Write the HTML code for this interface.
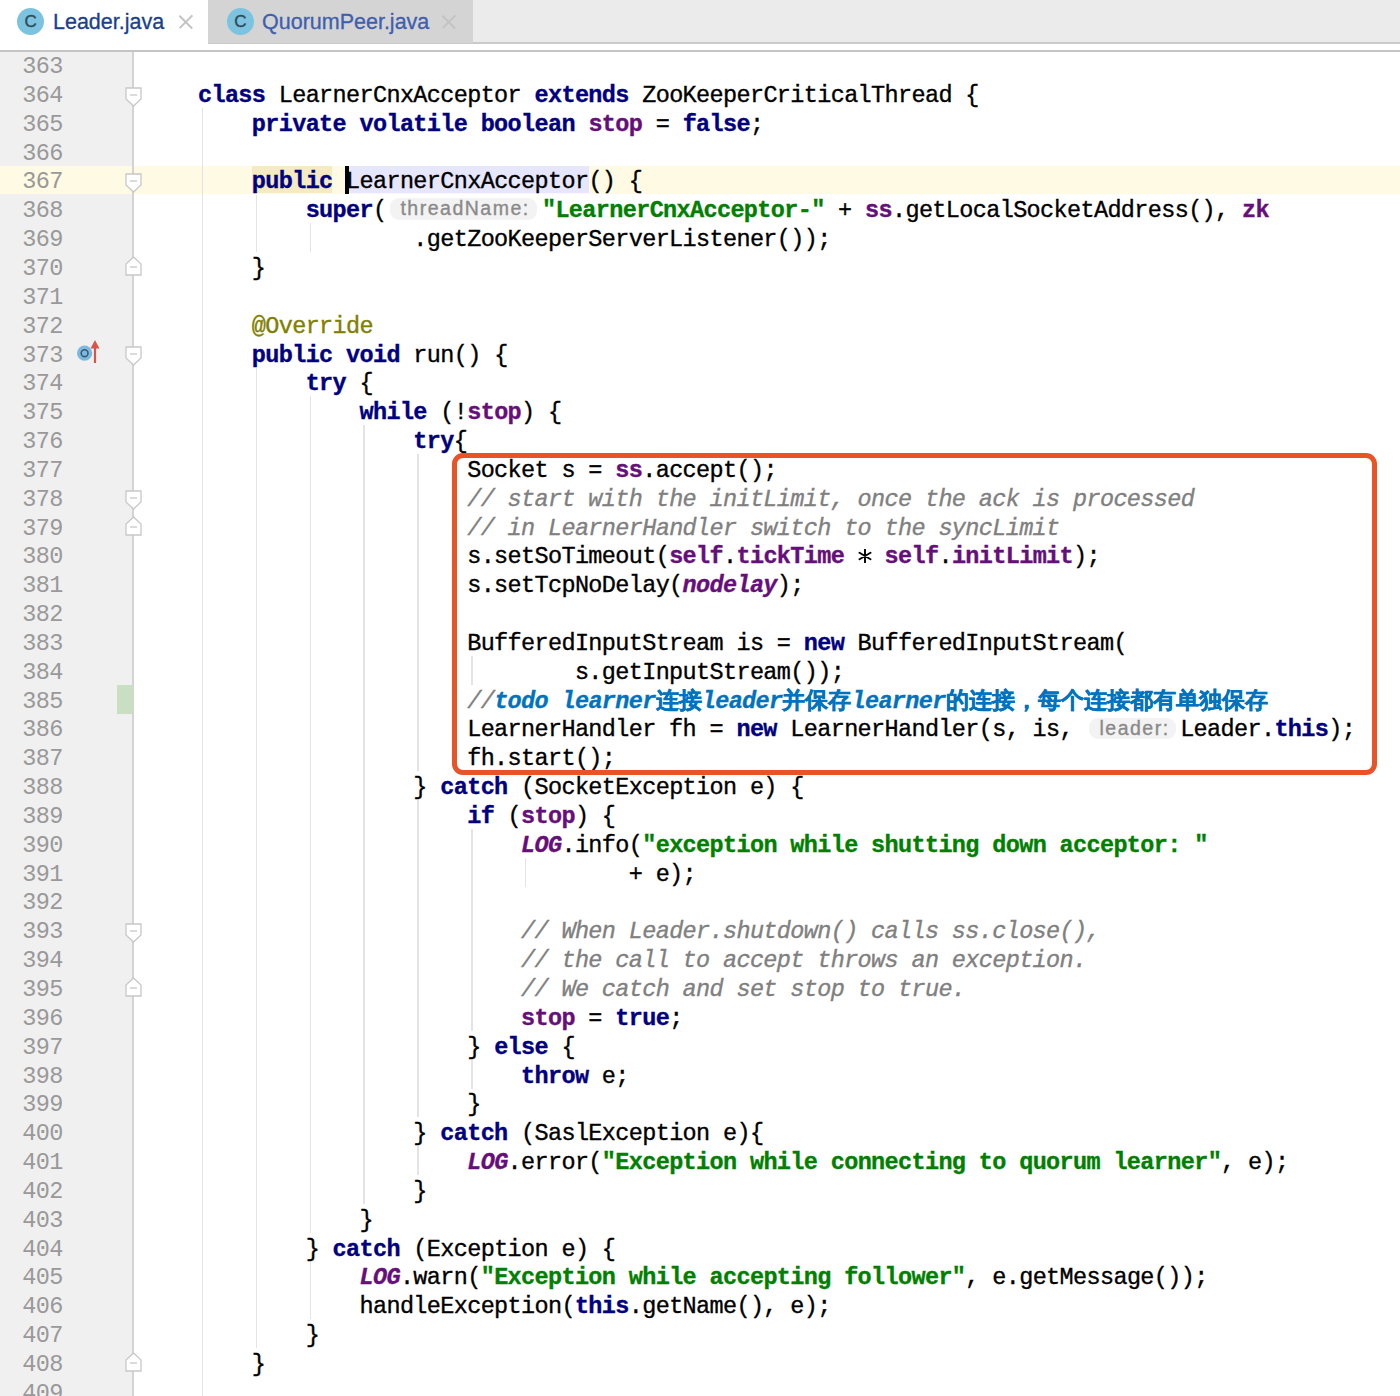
<!DOCTYPE html>
<html><head><meta charset="utf-8"><title>Leader.java</title>
<style>
html,body{margin:0;padding:0;width:1400px;height:1396px;overflow:hidden;background:#fff}
body{position:relative}
.tabbar{position:absolute;left:0;top:0;width:1400px;height:42px;background:#ebebeb}
.tabline{position:absolute;left:208px;top:42px;width:1192px;height:2px;background:#cacaca}
.tab{position:absolute;top:0;height:44px;font-family:"Liberation Sans",sans-serif;font-size:21.5px}
.tab1{left:0;width:208px;background:#fff}
.tab2{left:208px;width:265px;height:43px;background:#d4d4d4}
.ticon{position:absolute;width:27px;height:27px;border-radius:50%;background:#7cc3df;top:7.5px}
.ticon{color:#2f4b58;font-family:"Liberation Sans",sans-serif;font-size:17px;line-height:27px;text-align:center;-webkit-text-stroke:0.4px #2f4b58}
.ttl{position:absolute;top:9px;line-height:26px;white-space:nowrap;-webkit-text-stroke:0.3px currentColor}
.tx{position:absolute;width:13px;height:13px;top:15.5px}
.tx:before,.tx:after{content:"";position:absolute;left:-2.25px;top:5.6px;width:17.5px;height:1.7px;background:#c3c3c3;transform:rotate(45deg)}
.tx:after{transform:rotate(-45deg)}
.sepw{position:absolute;left:0;top:44px;width:1400px;height:6px;background:#fff}
.sep{position:absolute;left:0;top:50px;width:1400px;height:2px;background:#c4c4c4}
.gutter{position:absolute;left:0;top:52px;width:133px;height:1344px;background:#f0f0f0}
.gline{position:absolute;left:132px;top:52px;width:1.6px;height:1344px;background:#d3d3d3}
.caretrow{position:absolute;left:0;width:1400px;height:28px;background:#fffae3}
.ln{position:absolute;left:22.3px;white-space:pre;font-family:"Liberation Mono",monospace;font-size:23.5px;letter-spacing:-0.64px;line-height:28.84px;color:#999}
.cl{position:absolute;left:144.1px;white-space:pre;font-family:"Liberation Mono",monospace;font-size:23.5px;letter-spacing:-0.64px;line-height:28.84px;color:#000;-webkit-text-stroke:0.35px currentColor}
.k{color:#000080;font-weight:bold}
.f{color:#660e7a;font-weight:bold}
.sf{color:#660e7a;font-weight:bold;font-style:italic}
.s{color:#008000;font-weight:bold}
.c{color:#808080;font-style:italic}
.a{color:#808000}
.t{color:#0073bf;font-weight:bold;font-style:italic}
.cj{display:inline-block;letter-spacing:0;font-size:22.6px;font-style:normal;white-space:nowrap;overflow:visible}
.pub{}
.uc{}
.hl{position:absolute;top:165.6px;height:27.9px}
.caret{display:inline-block;position:relative;width:0;height:28.84px;vertical-align:top}
.caret:before{content:"";position:absolute;left:-1.3px;top:-2.5px;width:4px;height:28.3px;background:#000}
.ast{display:inline-block;position:relative;width:13.46px;height:28.84px;vertical-align:top}
.ast svg{position:absolute;left:0.3px;top:5.8px}
.hint{display:inline-block;position:relative;height:28.84px;vertical-align:top;letter-spacing:0}
.hb{position:absolute;top:1.1px;height:21.2px;border-radius:9px;background:#f3f3f3;color:#8a8a8a;font-family:"Liberation Sans",sans-serif;font-size:19.5px;letter-spacing:1.5px;line-height:20.2px;padding-left:0;box-sizing:border-box;text-indent:10px;font-weight:normal;font-style:normal}
.guide{position:absolute;width:1.4px;background:#e4e4e4}
.fold{position:absolute;left:124.5px;width:17px;height:20px}
.chg{position:absolute;left:117px;width:16px;background:#c9dfc1}
.box{position:absolute;left:452.3px;top:453.1px;width:924.6px;height:321.8px;border:5.5px solid #ea5227;border-radius:11px;box-sizing:border-box}
</style></head><body>

<div class="tabbar"></div><div class="tabline"></div>
<div class="tab tab1"><div class="ticon" style="left:17.1px">C</div><div class="ttl" style="left:53px;color:#1a3f8e">Leader.java</div><div class="tx" style="left:179px"></div></div>
<div class="tab tab2"><div class="ticon" style="left:18.9px">C</div><div class="ttl" style="left:54px;color:#3f5fae">QuorumPeer.java</div><div class="tx" style="left:234px"></div></div>
<div class="sepw"></div><div class="sep"></div>
<div class="gutter"></div>
<div class="caretrow" style="top:165.96px"></div>
<div class="hl" style="left:252.1px;width:80.3px;background:#f5ebc2"></div>
<div class="hl" style="left:349.1px;width:240px;background:#e6e6fc"></div>
<div class="gline"></div>
<div class="chg" style="top:684.88px;height:28.84px"></div>
<div class="guide" style="left:201.78px;top:108.08px;height:1287.92px"></div>
<div class="guide" style="left:255.66px;top:194.60px;height:57.68px"></div>
<div class="guide" style="left:309.54px;top:223.44px;height:28.84px"></div>
<div class="guide" style="left:255.66px;top:367.64px;height:980.56px"></div>
<div class="guide" style="left:309.54px;top:396.48px;height:836.36px"></div>
<div class="guide" style="left:309.54px;top:1261.68px;height:57.68px"></div>
<div class="guide" style="left:363.42px;top:425.32px;height:778.68px"></div>
<div class="guide" style="left:417.30px;top:454.16px;height:317.24px"></div>
<div class="guide" style="left:417.30px;top:800.24px;height:317.24px"></div>
<div class="guide" style="left:417.30px;top:1146.32px;height:28.84px"></div>
<div class="guide" style="left:471.18px;top:656.04px;height:28.84px"></div>
<div class="guide" style="left:471.18px;top:829.08px;height:201.88px"></div>
<div class="guide" style="left:471.18px;top:1059.80px;height:28.84px"></div>
<div class="guide" style="left:525.06px;top:857.92px;height:28.84px"></div>
<div class="ln" style="top:53.10px">363</div>
<div class="ln" style="top:81.94px">364</div>
<div class="ln" style="top:110.78px">365</div>
<div class="ln" style="top:139.62px">366</div>
<div class="ln" style="top:168.46px">367</div>
<div class="ln" style="top:197.30px">368</div>
<div class="ln" style="top:226.14px">369</div>
<div class="ln" style="top:254.98px">370</div>
<div class="ln" style="top:283.82px">371</div>
<div class="ln" style="top:312.66px">372</div>
<div class="ln" style="top:341.50px">373</div>
<div class="ln" style="top:370.34px">374</div>
<div class="ln" style="top:399.18px">375</div>
<div class="ln" style="top:428.02px">376</div>
<div class="ln" style="top:456.86px">377</div>
<div class="ln" style="top:485.70px">378</div>
<div class="ln" style="top:514.54px">379</div>
<div class="ln" style="top:543.38px">380</div>
<div class="ln" style="top:572.22px">381</div>
<div class="ln" style="top:601.06px">382</div>
<div class="ln" style="top:629.90px">383</div>
<div class="ln" style="top:658.74px">384</div>
<div class="ln" style="top:687.58px">385</div>
<div class="ln" style="top:716.42px">386</div>
<div class="ln" style="top:745.26px">387</div>
<div class="ln" style="top:774.10px">388</div>
<div class="ln" style="top:802.94px">389</div>
<div class="ln" style="top:831.78px">390</div>
<div class="ln" style="top:860.62px">391</div>
<div class="ln" style="top:889.46px">392</div>
<div class="ln" style="top:918.30px">393</div>
<div class="ln" style="top:947.14px">394</div>
<div class="ln" style="top:975.98px">395</div>
<div class="ln" style="top:1004.82px">396</div>
<div class="ln" style="top:1033.66px">397</div>
<div class="ln" style="top:1062.50px">398</div>
<div class="ln" style="top:1091.34px">399</div>
<div class="ln" style="top:1120.18px">400</div>
<div class="ln" style="top:1149.02px">401</div>
<div class="ln" style="top:1177.86px">402</div>
<div class="ln" style="top:1206.70px">403</div>
<div class="ln" style="top:1235.54px">404</div>
<div class="ln" style="top:1264.38px">405</div>
<div class="ln" style="top:1293.22px">406</div>
<div class="ln" style="top:1322.06px">407</div>
<div class="ln" style="top:1350.90px">408</div>
<div class="ln" style="top:1379.74px">409</div>
<div class="cl" style="top:81.94px">    <span class="k">class</span> LearnerCnxAcceptor <span class="k">extends</span> ZooKeeperCriticalThread {</div>
<div class="cl" style="top:110.78px">        <span class="k">private volatile boolean</span> <span class="f">stop</span> = <span class="k">false</span>;</div>
<div class="cl" style="top:168.46px">        <span class="k pub">public</span> <span class="caret"></span><span class="uc">LearnerCnxAcceptor</span>() {</div>
<div class="cl" style="top:197.30px">            <span class="k">super</span>(<span class="hint" style="width:155.5px"><span class="hb" style="left:4px;width:146.6px">threadName:</span></span><span class="s">&quot;LearnerCnxAcceptor-&quot;</span> + <span class="f">ss</span>.getLocalSocketAddress(), <span class="f">zk</span></div>
<div class="cl" style="top:226.14px">                    .getZooKeeperServerListener());</div>
<div class="cl" style="top:254.98px">        }</div>
<div class="cl" style="top:312.66px">        <span class="a">@Override</span></div>
<div class="cl" style="top:341.50px">        <span class="k">public void</span> run() {</div>
<div class="cl" style="top:370.34px">            <span class="k">try</span> {</div>
<div class="cl" style="top:399.18px">                <span class="k">while</span> (!<span class="f">stop</span>) {</div>
<div class="cl" style="top:428.02px">                    <span class="k">try</span>{</div>
<div class="cl" style="top:456.86px">                        Socket s = <span class="f">ss</span>.accept();</div>
<div class="cl" style="top:485.70px">                        <span class="c">// start with the initLimit, once the ack is processed</span></div>
<div class="cl" style="top:514.54px">                        <span class="c">// in LearnerHandler switch to the syncLimit</span></div>
<div class="cl" style="top:543.38px">                        s.setSoTimeout(<span class="f">self</span>.<span class="f">tickTime</span> <span class="ast"><svg width="14" height="14" viewBox="0 0 14 14"><path d="M7,0.6V13.4M1.5,3.8L12.5,10.2M1.5,10.2L12.5,3.8" stroke="#000" stroke-width="1.9" stroke-linecap="round"/></svg></span> <span class="f">self</span>.<span class="f">initLimit</span>);</div>
<div class="cl" style="top:572.22px">                        s.setTcpNoDelay(<span class="sf">nodelay</span>);</div>
<div class="cl" style="top:629.90px">                        BufferedInputStream is = <span class="k">new</span> BufferedInputStream(</div>
<div class="cl" style="top:658.74px">                                s.getInputStream());</div>
<div class="cl" style="top:687.58px">                        <span class="c">//</span><span class="t">todo learner</span><span class="t cj" style="width:46.00px">连接</span><span class="t">leader</span><span class="t cj" style="width:69.00px">并保存</span><span class="t">learner</span><span class="t cj" style="width:322.00px">的连接，每个连接都有单独保存</span></div>
<div class="cl" style="top:716.42px">                        LearnerHandler fh = <span class="k">new</span> LearnerHandler(s, is, <span class="hint" style="width:93.7px"><span class="hb" style="left:3px;width:86.3px">leader:</span></span>Leader.<span class="k">this</span>);</div>
<div class="cl" style="top:745.26px">                        fh.start();</div>
<div class="cl" style="top:774.10px">                    } <span class="k">catch</span> (SocketException e) {</div>
<div class="cl" style="top:802.94px">                        <span class="k">if</span> (<span class="f">stop</span>) {</div>
<div class="cl" style="top:831.78px">                            <span class="sf">LOG</span>.info(<span class="s">&quot;exception while shutting down acceptor: &quot;</span></div>
<div class="cl" style="top:860.62px">                                    + e);</div>
<div class="cl" style="top:918.30px">                            <span class="c">// When Leader.shutdown() calls ss.close(),</span></div>
<div class="cl" style="top:947.14px">                            <span class="c">// the call to accept throws an exception.</span></div>
<div class="cl" style="top:975.98px">                            <span class="c">// We catch and set stop to true.</span></div>
<div class="cl" style="top:1004.82px">                            <span class="f">stop</span> = <span class="k">true</span>;</div>
<div class="cl" style="top:1033.66px">                        } <span class="k">else</span> {</div>
<div class="cl" style="top:1062.50px">                            <span class="k">throw</span> e;</div>
<div class="cl" style="top:1091.34px">                        }</div>
<div class="cl" style="top:1120.18px">                    } <span class="k">catch</span> (SaslException e){</div>
<div class="cl" style="top:1149.02px">                        <span class="sf">LOG</span>.error(<span class="s">&quot;Exception while connecting to quorum learner&quot;</span>, e);</div>
<div class="cl" style="top:1177.86px">                    }</div>
<div class="cl" style="top:1206.70px">                }</div>
<div class="cl" style="top:1235.54px">            } <span class="k">catch</span> (Exception e) {</div>
<div class="cl" style="top:1264.38px">                <span class="sf">LOG</span>.warn(<span class="s">&quot;Exception while accepting follower&quot;</span>, e.getMessage());</div>
<div class="cl" style="top:1293.22px">                handleException(<span class="k">this</span>.getName(), e);</div>
<div class="cl" style="top:1322.06px">            }</div>
<div class="cl" style="top:1350.90px">        }</div>
<svg class="fold" style="top:86.54px" viewBox="0 0 17 20" width="17" height="20"><path d="M1,1 H16 V12 L8.5,19 L1,12 Z" fill="#fff" stroke="#c8c8c8" stroke-width="1.3"/><path d="M5,8.0 H12" stroke="#c8c8c8" stroke-width="1.3"/></svg>
<svg class="fold" style="top:173.06px" viewBox="0 0 17 20" width="17" height="20"><path d="M1,1 H16 V12 L8.5,19 L1,12 Z" fill="#fff" stroke="#c8c8c8" stroke-width="1.3"/><path d="M5,8.0 H12" stroke="#c8c8c8" stroke-width="1.3"/></svg>
<svg class="fold" style="top:346.10px" viewBox="0 0 17 20" width="17" height="20"><path d="M1,1 H16 V12 L8.5,19 L1,12 Z" fill="#fff" stroke="#c8c8c8" stroke-width="1.3"/><path d="M5,8.0 H12" stroke="#c8c8c8" stroke-width="1.3"/></svg>
<svg class="fold" style="top:490.30px" viewBox="0 0 17 20" width="17" height="20"><path d="M1,1 H16 V12 L8.5,19 L1,12 Z" fill="#fff" stroke="#c8c8c8" stroke-width="1.3"/><path d="M5,8.0 H12" stroke="#c8c8c8" stroke-width="1.3"/></svg>
<svg class="fold" style="top:922.90px" viewBox="0 0 17 20" width="17" height="20"><path d="M1,1 H16 V12 L8.5,19 L1,12 Z" fill="#fff" stroke="#c8c8c8" stroke-width="1.3"/><path d="M5,8.0 H12" stroke="#c8c8c8" stroke-width="1.3"/></svg>
<svg class="fold" style="top:256.48px" viewBox="0 0 17 20" width="17" height="20"><path d="M1,19 H16 V8 L8.5,1 L1,8 Z" fill="#fff" stroke="#c8c8c8" stroke-width="1.3"/><path d="M5,11 H12" stroke="#c8c8c8" stroke-width="1.3"/></svg>
<svg class="fold" style="top:516.04px" viewBox="0 0 17 20" width="17" height="20"><path d="M1,19 H16 V8 L8.5,1 L1,8 Z" fill="#fff" stroke="#c8c8c8" stroke-width="1.3"/><path d="M5,11 H12" stroke="#c8c8c8" stroke-width="1.3"/></svg>
<svg class="fold" style="top:977.48px" viewBox="0 0 17 20" width="17" height="20"><path d="M1,19 H16 V8 L8.5,1 L1,8 Z" fill="#fff" stroke="#c8c8c8" stroke-width="1.3"/><path d="M5,11 H12" stroke="#c8c8c8" stroke-width="1.3"/></svg>
<svg class="fold" style="top:1352.40px" viewBox="0 0 17 20" width="17" height="20"><path d="M1,19 H16 V8 L8.5,1 L1,8 Z" fill="#fff" stroke="#c8c8c8" stroke-width="1.3"/><path d="M5,11 H12" stroke="#c8c8c8" stroke-width="1.3"/></svg>
<svg style="position:absolute;left:76px;top:337.80px" width="28" height="40" viewBox="0 0 28 40"><circle cx="8.6" cy="15.2" r="7.6" fill="#7cb9e2"/><circle cx="8.6" cy="15.2" r="3.4" fill="none" stroke="#3b5a6e" stroke-width="1.6"/><path d="M19,25 V7" stroke="#d9534a" stroke-width="2.2"/><path d="M14.5,10.5 L19,2 L23.5,10.5 Z" fill="#d9534a"/></svg>
<div class="box"></div>
</body></html>
